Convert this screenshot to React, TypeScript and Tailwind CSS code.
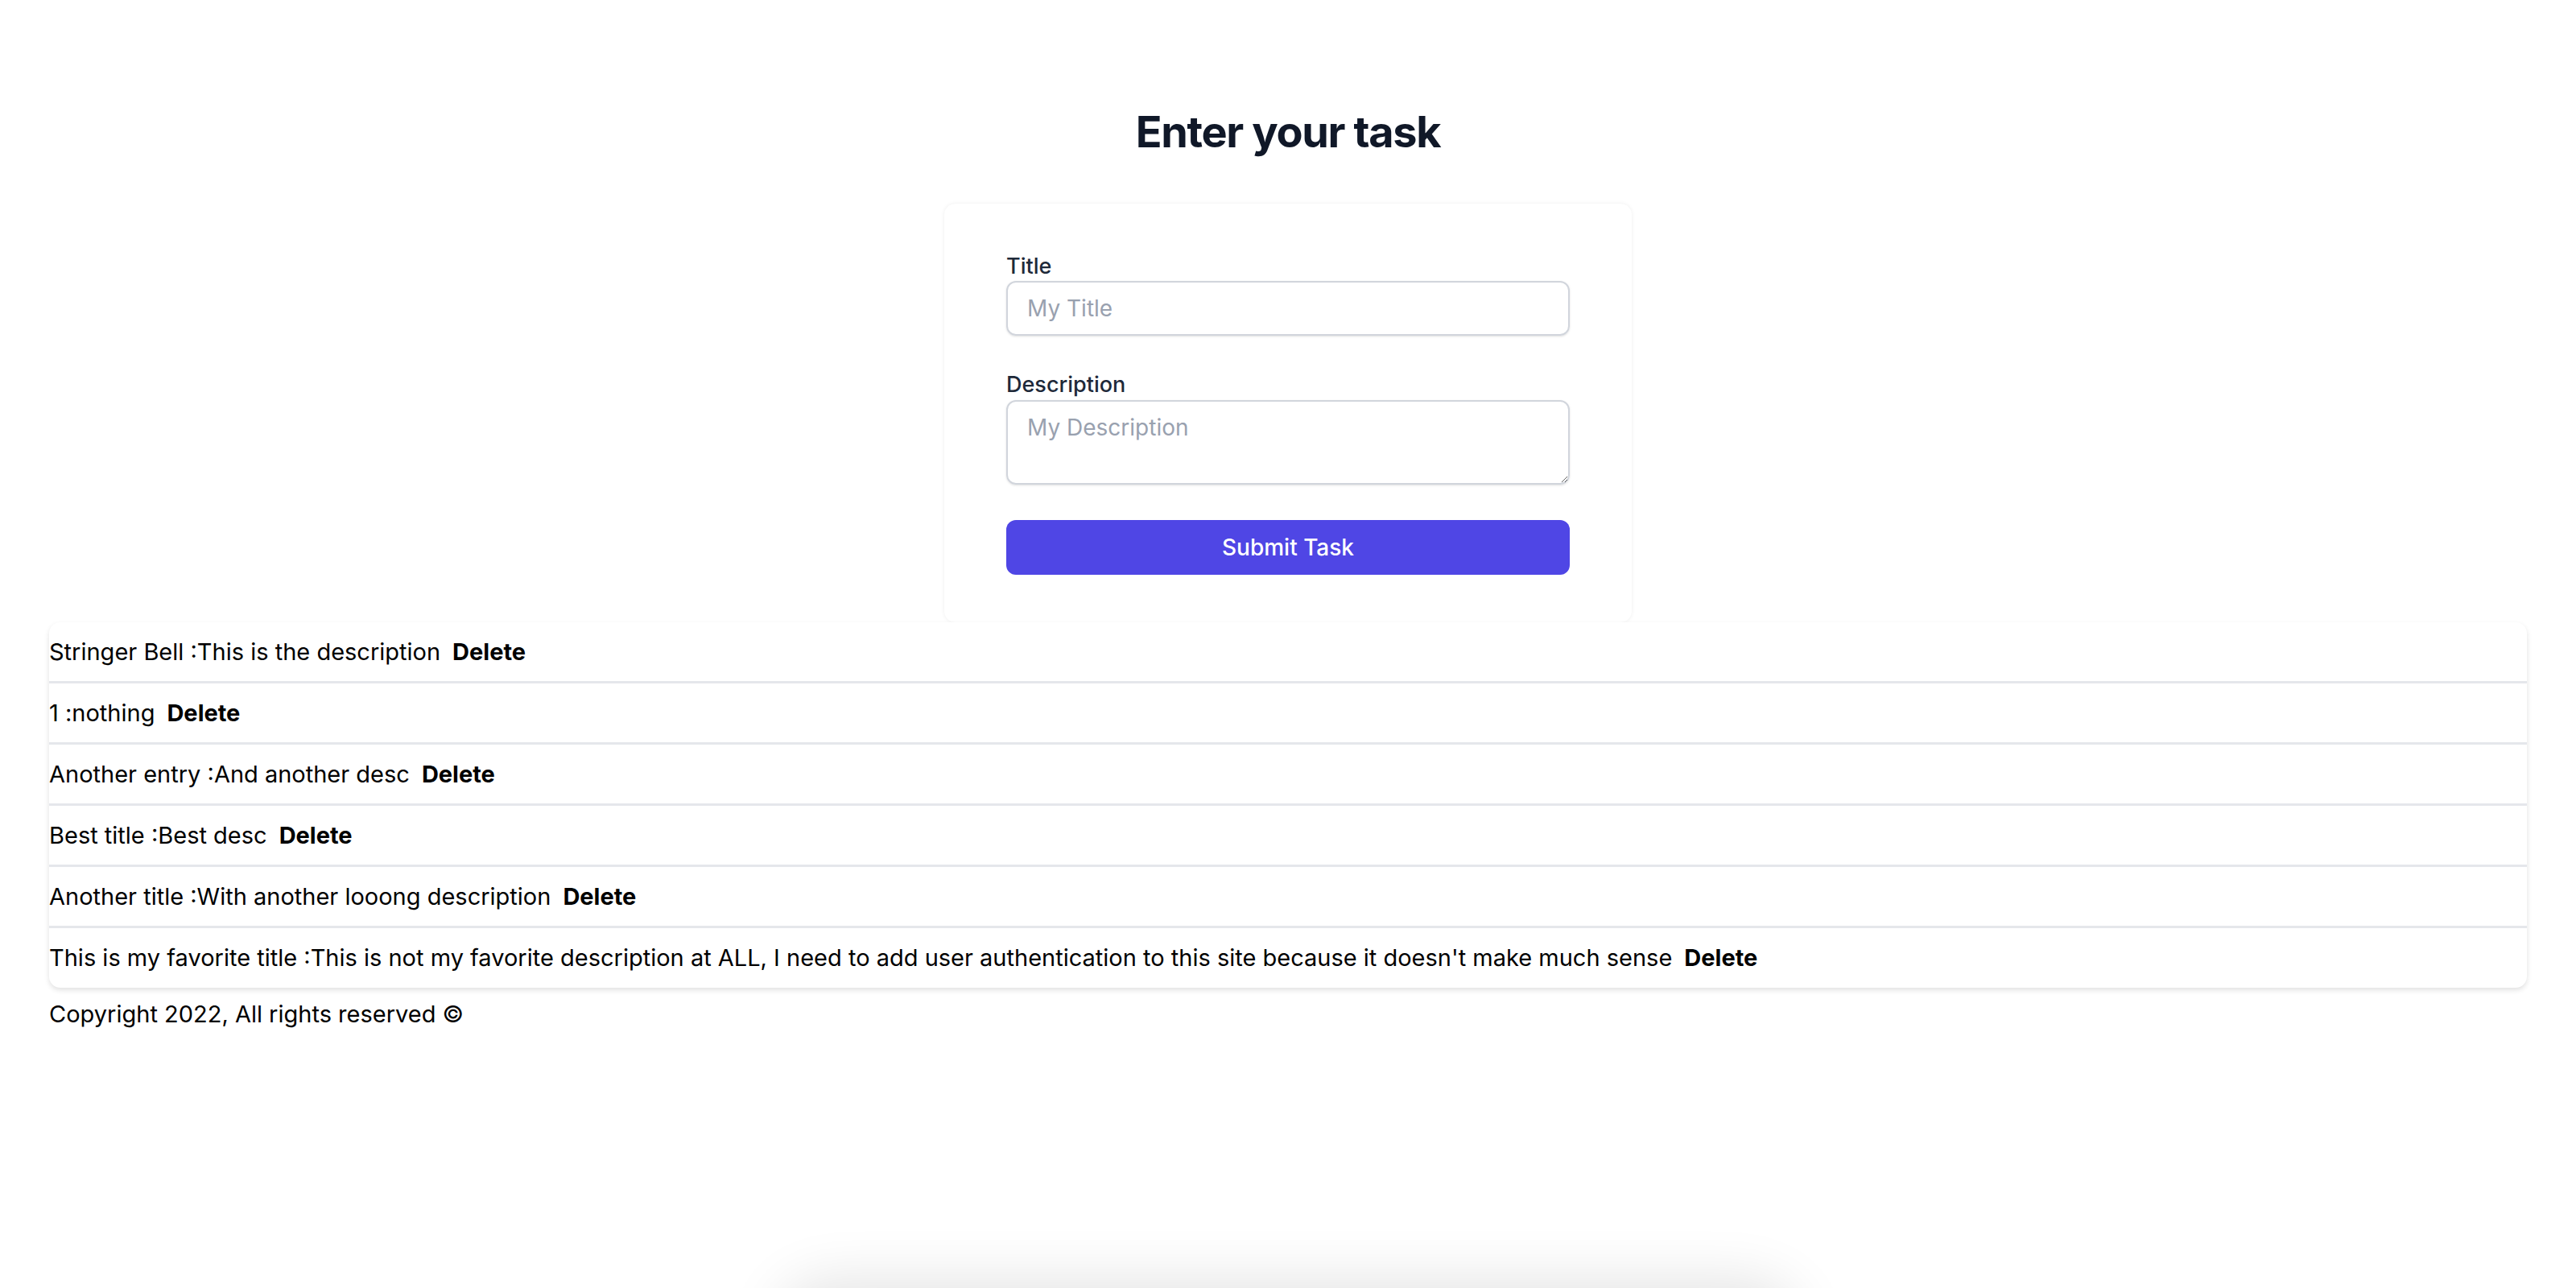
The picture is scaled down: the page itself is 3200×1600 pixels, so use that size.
import { useState } from 'react';

type Task = { id: number; title: string; description: string };

const INITIAL_TASKS: Task[] = [
  { id: 1, title: 'Stringer Bell', description: 'This is the description' },
  { id: 2, title: '1', description: 'nothing' },
  { id: 3, title: 'Another entry', description: 'And another desc' },
  { id: 4, title: 'Best title', description: 'Best desc' },
  { id: 5, title: 'Another title', description: 'With another looong description' },
  {
    id: 6,
    title: 'This is my favorite title',
    description:
      "This is not my favorite description at ALL, I need to add user authentication to this site because it doesn't make much sense",
  },
];

function TaskForm({ onAdd }: { onAdd: (title: string, description: string) => void }) {
  const [title, setTitle] = useState('');
  const [description, setDescription] = useState('');

  const submit = (e: React.FormEvent) => {
    e.preventDefault();
    if (!title) return;
    onAdd(title, description);
    setTitle('');
    setDescription('');
  };

  return (
    <form
      onSubmit={submit}
      className="mx-auto w-[854px] rounded-[14px] bg-white px-[77px] pt-[60px] pb-[59px] shadow-[0_0_5px_rgba(0,0,0,0.07)]"
    >
      <label className="block text-[27px] leading-[36px] font-medium text-gray-800">Title</label>
      <input
        value={title}
        onChange={(e) => setTitle(e.target.value)}
        placeholder="My Title"
        className="block h-[68px] w-full rounded-[12px] border-2 border-gray-300 px-[24px] text-[28px] text-gray-900 shadow-sm outline-none placeholder:text-gray-400"
      />
      <label className="mt-[42px] block text-[27px] leading-[38px] font-medium text-gray-800">Description</label>
      <textarea
        value={description}
        onChange={(e) => setDescription(e.target.value)}
        placeholder="My Description"
        className="block h-[105px] w-full rounded-[12px] border-2 border-gray-300 px-[24px] pt-[12px] text-[28px] leading-[40px] text-gray-900 shadow-sm outline-none placeholder:text-gray-400"
      />
      <button
        type="submit"
        className="mt-[44px] flex h-[68px] w-full items-center justify-center rounded-[12px] bg-[#4f46e5] text-[28px] font-medium text-white"
      >
        Submit Task
      </button>
    </form>
  );
}

export default function App() {
  const [tasks, setTasks] = useState<Task[]>(INITIAL_TASKS);

  const addTask = (title: string, description: string) =>
    setTasks((t) => [...t, { id: Date.now(), title, description }]);
  const removeTask = (id: number) => setTasks((t) => t.filter((x) => x.id !== id));

  return (
    <div className="relative h-[1600px] overflow-hidden bg-white font-['Inter','Liberation_Sans',sans-serif]">
      <h1 className="pt-[137px] pb-[62px] text-center text-[54px] leading-none font-bold tracking-tight text-gray-900">
        Enter your task
      </h1>

      <TaskForm onAdd={addTask} />

      <ul className="mx-[61px] overflow-hidden rounded-[14px] bg-white shadow-[0_3px_6px_rgba(0,0,0,0.12)]">
        {tasks.map((task, i) => (
          <li
            key={task.id}
            className={
              i === tasks.length - 1
                ? 'flex h-[74px] items-center text-[29px] text-black'
                : 'flex h-[76px] items-center border-b-[3px] border-gray-200 text-[29px] text-black'
            }
          >
            <span>
              {task.title} :{task.description}
            </span>
            <button onClick={() => removeTask(task.id)} className="ml-[15px] font-bold">
              Delete
            </button>
          </li>
        ))}
      </ul>

      <p className="mx-[61px] mt-[11px] text-[29px] leading-[44px] text-black">Copyright 2022, All rights reserved ©</p>

      {/* shadow of the element sitting just below the viewport */}
      <div className="absolute top-[1615px] left-[990px] h-[80px] w-[1220px] rounded-[40px] bg-white shadow-[0_0_70px_25px_rgba(0,0,0,0.11)]" />
    </div>
  );
}
